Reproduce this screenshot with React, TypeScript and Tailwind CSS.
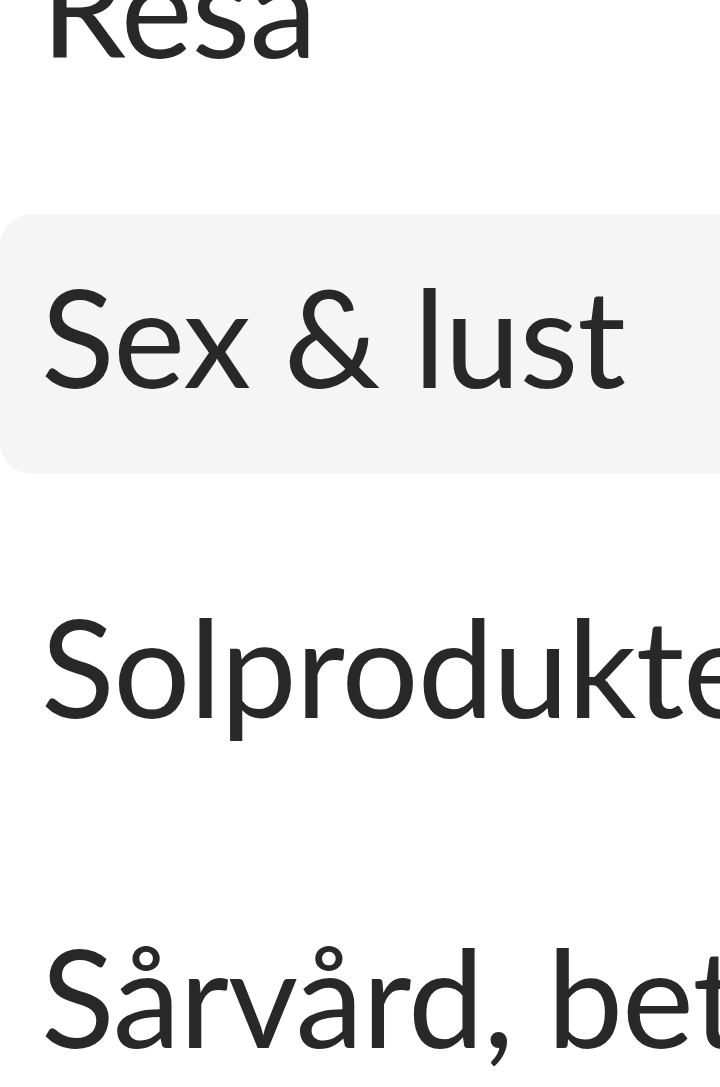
const items = ['Resa', 'Sex & lust', 'Solprodukter', 'Sårvård, bett & plåster']

export default function App() {
  const active = 'Sex & lust'
  return (
    <div className="h-[1087px] w-[720px] overflow-hidden bg-white">
      <ul
        className="-mt-[116px] flex flex-col gap-[70px] text-[#282828]"
        style={{ fontFamily: 'Lato, "Noto Sans", sans-serif' }}
      >
        {items.map((label) => (
          <li
            key={label}
            className={`w-[1200px] h-[260px] rounded-l-[32px] pl-[41px] pt-[54px] pb-[70px] text-[136px] leading-[136px] tracking-[-1px] whitespace-nowrap ${
              label === active ? 'bg-[#f5f5f5]' : ''
            }`}
          >
            {label}
          </li>
        ))}
      </ul>
    </div>
  )
}
